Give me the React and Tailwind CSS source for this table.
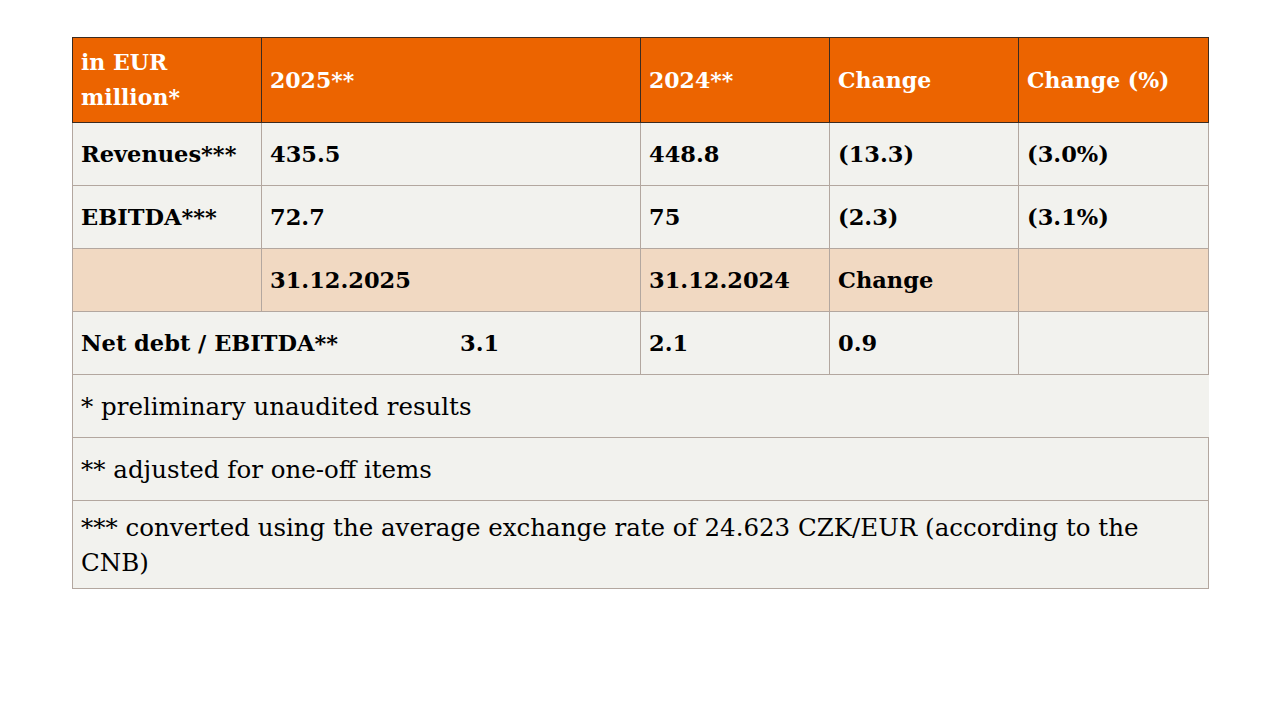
const font = { fontFamily: '"DejaVu Serif", "Liberation Serif", serif' };

const head = "border border-[#3b2b20] bg-[#ec6400] px-2 py-[7px] align-middle text-left font-bold text-white text-[22px]";
const cell = "border border-[#b3a79f] px-2 py-[7px] align-middle text-left font-bold text-black text-[22.5px]";
const note = "border border-[#b3a79f] bg-[#f2f2ee] px-2 py-[8px] align-middle text-left font-normal text-black text-[24.5px]";

export default function App() {
  return (
    <div className="min-h-screen w-full bg-white pt-[37px]" style={font}>
      <table className="ml-[72px] w-[1136px] table-fixed border-collapse leading-[35px]">
        <colgroup>
          <col className="w-[189px]" />
          <col className="w-[379px]" />
          <col className="w-[189px]" />
          <col className="w-[189px]" />
          <col className="w-[190px]" />
        </colgroup>
        <thead>
          <tr className="h-[84px]">
            <th className={head}>in EUR million*</th>
            <th className={head}>2025**</th>
            <th className={head}>2024**</th>
            <th className={head}>Change</th>
            <th className={head}>Change (%)</th>
          </tr>
        </thead>
        <tbody>
          <tr className="h-[63px] bg-[#f2f2ee]">
            <td className={cell}>Revenues***</td>
            <td className={cell}>435.5</td>
            <td className={cell}>448.8</td>
            <td className={cell}>(13.3)</td>
            <td className={cell}>(3.0%)</td>
          </tr>
          <tr className="h-[63px] bg-[#f2f2ee]">
            <td className={cell}>EBITDA***</td>
            <td className={cell}>72.7</td>
            <td className={cell}>75</td>
            <td className={cell}>(2.3)</td>
            <td className={cell}>(3.1%)</td>
          </tr>
          <tr className="h-[63px] bg-[#f1d9c2]">
            <td className={cell}></td>
            <td className={cell}>31.12.2025</td>
            <td className={cell}>31.12.2024</td>
            <td className={cell}>Change</td>
            <td className={cell}></td>
          </tr>
          <tr className="h-[63px] bg-[#f2f2ee]">
            <td className={cell} colSpan={2}>
              <div className="flex">
                <span className="w-[379px]">Net debt / EBITDA**</span>
                <span>3.1</span>
              </div>
            </td>
            <td className={cell}>2.1</td>
            <td className={cell}>0.9</td>
            <td className={cell}></td>
          </tr>
          <tr className="h-[63px]">
            <td className={`${note} border-r-0 border-r-transparent`} colSpan={5}>* preliminary unaudited results</td>
          </tr>
          <tr className="h-[63px]">
            <td className={note} colSpan={5}>** adjusted for one-off items</td>
          </tr>
          <tr className="h-[88px]">
            <td className={`${note} pr-[40px]`} colSpan={5}>
              *** converted using the average exchange rate of 24.623 CZK/EUR (according to the CNB)
            </td>
          </tr>
        </tbody>
      </table>
    </div>
  );
}
